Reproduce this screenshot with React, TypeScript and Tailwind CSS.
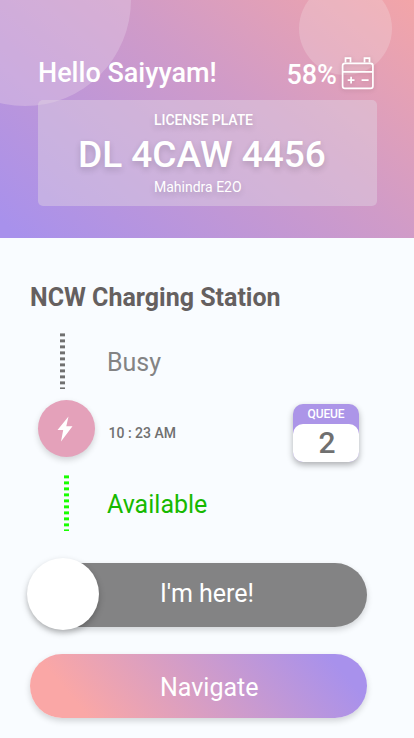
import React from "react";

function BatteryIcon() {
  return (
    <svg width="34" height="34" viewBox="0 0 34 34" fill="none" stroke="white" strokeWidth="1.7" className="drop-shadow-sm">
      <path d="M4.5 6.5V2.2H9.5V6.5M23.5 6.5V2.2H28.5V6.5" />
      <rect x="1.6" y="7.4" width="30.3" height="25" rx="2.4" />
      <path d="M1.6 15.8H31.9M6.7 24.2H13.5M10.1 20.8V27.6M20.6 24.2H27.6" />
    </svg>
  );
}

function Dashes({ color }: { color: string }) {
  return (
    <div
      className={`h-14 w-[5px] bg-[repeating-linear-gradient(to_bottom,color-mix(in_srgb,currentColor_60%,transparent)_0_1px,currentColor_1px_3px,color-mix(in_srgb,currentColor_35%,transparent)_3px_4px,transparent_4px_6px)] ${color}`}
    />
  );
}

export default function App() {
  return (
    <main className="h-[738px] w-[414px] overflow-hidden bg-[#f9fcff] font-['Roboto',sans-serif]">
      <header className="relative h-[238px] overflow-hidden bg-[linear-gradient(39deg,#a891ec_3%,#d09bc8_58%,#f3a5a8_100%)] pr-[37px] pl-[38px] pt-[56px] text-white">
        <div className="absolute -top-[106px] -left-[81px] size-[212px] rounded-full bg-[#e3cde6]/40" />
        <div className="absolute -top-[18px] left-[299px] size-[93px] rounded-full bg-[#f2dfe2]/30" />
        <div className="relative flex h-[44px] justify-between">
          <h1 className="pt-px text-[27px] leading-8 font-medium whitespace-nowrap">Hello Saiyyam!</h1>
          <div className="flex pr-[2px]">
            <span className="mr-1 pt-[3px] text-[27px] leading-8 font-medium">58%</span>
            <BatteryIcon />
          </div>
        </div>
        <section className="relative h-[106px] rounded-[5px] bg-[#dfd4e3]/45 pt-3 [text-shadow:0_3px_6px_rgba(0,0,0,.16)]">
          <p className="pl-[116px] text-[14px] leading-4 font-medium tracking-[-0.07px]">LICENSE PLATE</p>
          <p className="pt-[5px] pl-10 text-[37px] leading-[44px] font-medium whitespace-nowrap">DL 4CAW 4456</p>
          <p className="pt-[2px] pl-[116px] text-[14px] leading-4">Mahindra E2O</p>
        </section>
      </header>

      <section className="h-[325px] px-[30px] pt-[45px]">
        <h2 className="text-[25px] leading-[30px] font-bold text-[#656060]">NCW Charging Station</h2>
        <div className="flex h-[87px] items-start pt-5 pl-[30px]">
          <Dashes color="text-[#707070]" />
          <p className="pt-[15px] pl-[42px] text-[25px] leading-[30px] text-[#838384]">Busy</p>
        </div>
        <div className="flex h-[75px] items-start pl-2">
          <div className="flex size-[57px] items-center justify-center rounded-full bg-[#e4a1ba] pr-[3px] pt-px shadow-[0_3px_6px_rgba(0,0,0,.16)]">
            <svg width="16" height="26" viewBox="0 0 16 26" fill="white">
              <path d="M11.5 0.5 0.5 14H6.2L4 25.5 15.5 10.3H9.3Z" />
            </svg>
          </div>
          <p className="pt-[25px] pl-[13.5px] text-[14px] leading-4 font-medium text-[#707070]">10 : 23 AM</p>
          <div className="mt-1 ml-auto mr-[25px] h-[58px] w-[66px] rounded-[10px] bg-[#ac95e8] text-center shadow-[0_3px_6px_rgba(0,0,0,.3)]">
            <p className="h-5 text-[12px] leading-5 font-medium tracking-[-0.1px] text-white">QUEUE</p>
            <p className="h-[38px] rounded-[10px] bg-white pr-px pl-[3px] text-[30px] leading-[38px] font-medium text-[#707070]">2</p>
          </div>
        </div>
        <div className="flex items-start pl-[34px]">
          <Dashes color="text-[#18ff00]" />
          <p className="pt-[15px] pl-[38px] text-[25px] leading-[30px] text-[#17b900]">Available</p>
        </div>
      </section>

      <div className="flex flex-col gap-[27px] pl-[30px] text-[25px] text-white">
        <button className="relative h-16 w-[337px] rounded-full bg-[#838384] pb-[3px] pl-[130px] text-left leading-[60px] shadow-[0_3px_6px_rgba(0,0,0,.16)]">
          <span className="absolute -top-[5px] -left-[3px] size-[72px] rounded-full bg-white shadow-[0_3px_6px_rgba(0,0,0,.25)]" />
          I'm here!
        </button>
        <button className="h-16 w-[337px] rounded-full bg-[linear-gradient(50deg,#faa7a6_15%,#a891ec_90%)] pt-[3px] pl-[130px] text-left leading-[60px] shadow-[0_3px_6px_rgba(0,0,0,.16)]">
          Navigate
        </button>
      </div>
    </main>
  );
}
